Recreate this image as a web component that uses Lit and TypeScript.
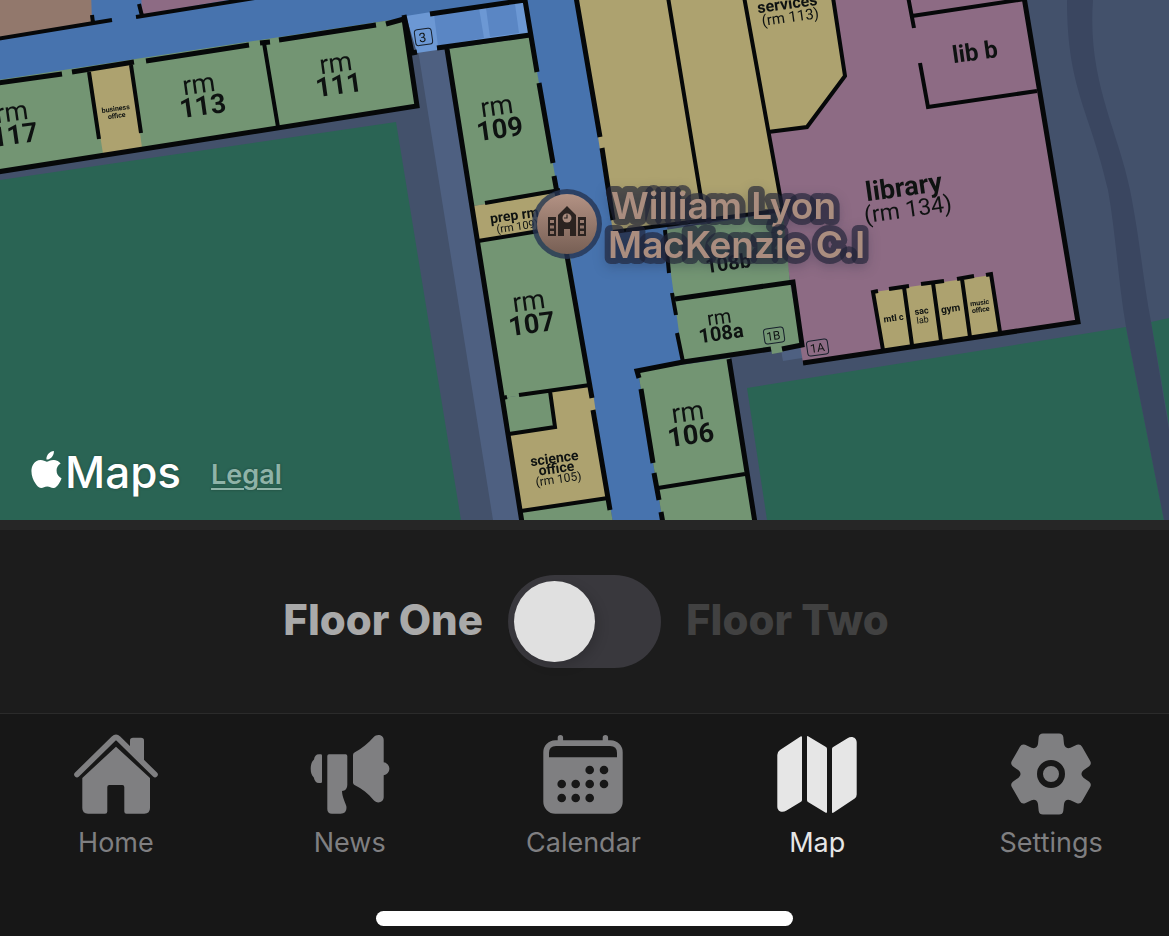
import { LitElement, html, svg, css } from "lit";
import { customElement, property, state } from "lit/decorators.js";
import { classMap } from "lit/directives/class-map.js";

type Shape = [string, string];
type Label = [string, number, number, number, string];

// Ground under the building: [class, points].
const ground: Shape[] = [
  ["grass", "0,180 396,122 461,520 0,520"],
  ["grass", "747,388 1126,327 1164,520 767,520"],
  ["grass", "1151,322 1169,318 1169,425"],
  ["path", "418,50 450,50 524,520 493,520"],
  ["path", "781,350 802,346 802,358 783,361"],
];

// Halls and rooms, painted in order: [class, points].
const areas: Shape[] = [
  ["hall", "-9,-9 577,-9 577,0 614,232 667,226 684,362 638,371 664,529 614,529 530,34 404,18 -9,84"],
  ["brown", "-9,-9 91,-9 92,22 -9,39"],
  ["mauve", "141,-9 280,-9 142,15"],
  ["green", "-9,81 404,18 417,106 -9,173"],
  ["tan", "90,70 131,64 142,148 103,154"],
  ["stairs", "406,16 431,12 525,1 530,34 437,49 437,50 417,53"],
  ["steps", "434,14 479,8 484,38 438,46"],
  ["steps", "486,8 515,4 519,33 490,37"],
  ["green", "447,49 531,37 558,193 473,206"],
  ["tan", "473,206 559,192 566,228 478,241"],
  ["green", "478,241 566,228 589,387 503,398"],
  ["green", "503,398 550,391 555,427 509,434"],
  ["tan", "550,391 592,385 608,499 521,511 509,434 555,427"],
  ["green", "521,511 609,499 614,529 524,529"],
  ["mauve", "744,-9 1023,-9 1078,322 803,363"],
  ["tan", "575,-9 742,-9 783,212 613,232"],
  ["tan", "743,-9 832,-9 845,76 807,127 768,133"],
  ["green", "665,230 783,212 790,283 802,345 683,362"],
  ["green", "638,371 730,358 756,529 664,529"],
  ["green", "771,348 782,346 783,352 772,354"],
  ["tan", "874,292 992,275 1000,332 883,350"],
];

const thickWalls =
  "M-9 173L417 106L404 19L386 24M-9 84L62 74M72 72L134 62M146 61L249 45M260 43L270 42M279 40L376 25" +
  "M430 14L525 0L537 72M404 15L412 53L417 52M437 48L530 35M447 49L523 529" +
  "M539 83L553 163M554 176L558 198M566 250L592 398M593 410L610 510" +
  "M575 -9L600 137M602 148L613 220M803 363L1078 322L1023 -9M639 378L637 371L683 362L771 349M782 349L802 345L793 282L675 299" +
  "M729 359L756 529M641 389L653 463M654 473L659 500M661 512L664 529";

const walls =
  "M264 43L278 127M89 72L99 139M131 65L141 133M92 15L93 23M-9 40L112 20M139 4L142 16M136 17L280 -6" +
  "M485 203L560 190M478 241L545 230M503 398L507 397M519 395L590 385M550 391L555 427L509 434M521 511L608 498" +
  "M667 -9L704 216M743 -9L783 212M613 232L783 210M832 -9L845 76L807 127L768 132" +
  "M907 -9L914 28M912 16L1025 -1M920 63L928 107L1037 91" +
  "M665 230L669 273M672 293L676 315M677 333L683 362M658 488L745 474" +
  "M878 291L873 292L883 350M889 289L909 286M921 284L944 281M957 279L974 276M986 275L991 274L1000 332" +
  "M904 287L912 345M933 283L941 341M962 279L970 337";

// Room names: [text, centre x, baseline y, size, class].
const labels: Label[] = [
  ["rm", 13, 121, 27, "room"], ["117", 16, 144, 27, "num"],
  ["rm", 200, 93, 27, "room"], ["113", 204, 115, 27, "num"],
  ["rm", 337, 72, 27, "room"], ["111", 340, 94, 27, "num"],
  ["rm", 498, 115, 27, "room"], ["109", 501, 138, 27, "num"],
  ["rm", 530, 310, 27, "room"], ["107", 533, 333, 27, "num"],
  ["rm", 689, 421, 27, "room"], ["106", 692, 444, 27, "num"],
  ["rm", 720, 324, 20, "room"], ["108a", 722, 340, 20, "num"],
  ["108b", 729, 270, 20, "num"],
  ["prep rm", 515, 220, 14, "num"], ["(rm 109)", 518, 230, 11, "room"],
  ["science", 555, 463, 14, "num"], ["office", 557, 473, 14, "num"], ["(rm 105)", 559, 483, 12, "room"],
  ["services", 788, 9, 16, "num"], ["(rm 113)", 791, 22, 15, "room"],
  ["lib b", 976, 60, 24, "num"],
  ["library", 905, 196, 27, "num"], ["(rm 134)", 909, 217, 23, "room"],
  ["business", 116, 111, 7, "num"], ["office", 117, 118, 7, "num"],
  ["mtl c", 894, 321, 9, "num"],
  ["sac", 922, 314, 9, "num"], ["lab", 923, 323, 9, "room"],
  ["gym", 951, 312, 10, "num"],
  ["music", 980, 305, 7, "num"], ["office", 981, 312, 7, "num"],
  ["3", 423, 42, 13, "room"], ["1B", 774, 340, 12, "room"], ["1A", 818, 352, 12, "room"],
];

const gearPath = (() => {
  const rotate = (x: number, y: number, deg: number) => {
    const a = (deg * Math.PI) / 180;
    const px = 42 + x * Math.cos(a) - y * Math.sin(a);
    const py = 41 + x * Math.sin(a) + y * Math.cos(a);
    return `${px.toFixed(2)} ${py.toFixed(2)}`;
  };
  let d = "";
  for (let i = 0; i < 6; i++) {
    const p = (x: number, y: number) => rotate(x, y, i * 60);
    d += `${i ? "L" : "M"}${p(-13, -30)}L${p(-12.3, -37)}Q${p(-11.8, -40.5)} ${p(-8, -40.5)}`;
    d += `L${p(8, -40.5)}Q${p(11.8, -40.5)} ${p(12.3, -37)}L${p(13, -30)}Q${p(14.2, -24.6)} ${rotate(-13, -30, i * 60 + 60)}`;
  }
  return d + "Z";
})();

const icons: Record<string, unknown> = {
  home: svg`
    <path d="M3 41.500L39.700 5.600Q42 3.400 44.300 5.600L81 41.500" fill="none" stroke="currentColor" stroke-width="5.600" stroke-linecap="round"/>
    <path d="M56 13V7.500Q56 4.700 59 4.700H67Q70 4.700 70 7.500V30L56 16.500Z"/>
    <path d="M42 13.700L76 45V75Q76 80.700 70.300 80.700H52.500Q50.300 80.700 50.300 78.500V54Q50.300 52 48.300 52H35.300Q33.300 52 33.300 54V78.500Q33.300 80.700 31 80.700H14Q8.300 80.700 8.300 75V45Z"/>`,
  news: svg`
    <path d="M14 22.500Q14 21.300 12.800 21.300H11C8 21.300 6.500 23.300 6 26.500C3.600 28.500 2.700 32 2.700 35.700C2.700 39.500 3.600 42.500 5.800 44.500C6.500 48 8 50 11 50H12.800Q14 50 14 48.800Z"/>
    <path d="M21 21.300H37.600Q39.300 21.300 39.300 23V52Q39.300 57.500 34 57.900C34.300 64 36.500 67.500 38.300 73Q39.500 80.700 32.500 80.700H24Q19.300 80.700 19.300 76V23Q19.300 21.300 21 21.300Z"/>
    <path d="M45 22Q45 20.300 46.500 19.500C54 15.500 60.500 10 65.500 4.300C69 .300 75.700 1.800 75.700 7V29.300A6.500 6.500 0 0 1 75.700 42.200V64C75.700 69.600 69 71.300 65.500 67C60.500 60.500 54 55.500 46.500 52Q45 51.300 45 49.500Z"/>`,
  calendar: svg`
    <path fill-rule="evenodd" d="M14.300 7.300H16.700V4.600A2.700 2.700 0 0 1 22.100 4.600V7.300H61.700V4.600A2.700 2.700 0 0 1 67.100 4.600V7.300H69.700A12 12 0 0 1 81.700 19.300V68.700A12 12 0 0 1 69.700 80.700H14.300A12 12 0 0 1 2.300 68.700V19.300A12 12 0 0 1 14.300 7.300ZM8 24.200H76V20Q76 13 69 13H15Q8 13 8 20Z"/>
    <g class="hole">
      ${[[48.7, 37], [63, 37], [20.7, 51], [34.7, 51], [48.7, 51], [63, 51], [20.7, 65], [34.7, 65], [48.7, 65]].map(
        ([x, y]) => svg`<circle cx=${x} cy=${y} r="4.300"/>`
      )}
    </g>`,
  map: svg`
    <path d="M2.300 22Q2.300 18.700 5 17L25.500 3.500Q27 2.600 27 4.300V67Q27 68 26 68.700L11.500 77.500C7 80.300 2.300 78.300 2.300 73.500Z"/>
    <path d="M32 4Q32 2.400 33.500 3.400L51 14Q52 14.700 52 16V78.500Q52 80.700 50.300 79.600L33 69Q32 68.300 32 67Z"/>
    <path d="M57 16Q57 14.700 58.200 14L72.500 5.200C77 2.500 81.700 4.800 81.700 9.500V61.500Q81.700 64 79.700 65.400L58.700 79.500Q57 80.600 57 79Z"/>`,
  settings: svg`
    <path d=${gearPath}/>
    <circle class="ring" cx="42" cy="41" r="11"/>`,
};

@customElement("floor-map")
class FloorMap extends LitElement {
  static styles = css`
    :host {
      position: relative;
      display: flex;
      align-items: flex-end;
      overflow: hidden;
      background: #43516b;
      min-height: 320px;
      color: #fff;
      font-family: Inter, "Liberation Sans", sans-serif;
    }
    .plan { position: absolute; inset: 0; width: 100%; height: 100%; }
    .overlay { filter: blur(0.6px); }
    .grass { fill: #2a6454; }
    .path { fill: #4e6081; }
    .road { fill: #3a4660; }
    .hall { fill: #4773ae; }
    .stairs { fill: #6c98d4; }
    .steps { fill: #5a86c4; }
    .green { fill: #739573; }
    .tan { fill: #ada26f; }
    .mauve { fill: #8d6b84; }
    .brown { fill: #92786c; }
    .walls { fill: none; stroke: #060809; stroke-width: 4; }
    .thick { stroke-width: 5; }
    .tag { fill: none; stroke: #17202c; stroke-width: 1; }
    .label { font-family: Roboto, sans-serif; text-anchor: middle; fill: #0e1211; }
    .num { font-weight: 700; }
    .room { font-weight: 400; }
    .halo { fill: #263452; opacity: 0.8; }
    .glyph { fill: #2b2320; }
    .face { fill: #a98b7d; }
    .place {
      font-size: 37px;
      font-weight: 600;
      fill: #aa8d7f;
      stroke: rgba(32, 36, 56, 0.65);
      stroke-width: 12;
      stroke-linejoin: round;
      paint-order: stroke;
      filter: drop-shadow(0 4px 6px rgba(20, 30, 50, 0.3));
    }
    .credits {
      position: relative;
      display: flex;
      align-items: center;
      gap: 30px;
      padding: 0 31px 20px;
      text-shadow: 0 0 3px rgba(0, 0, 0, 0.3);
    }
    .brand { display: flex; align-items: center; gap: 3px; font-size: 44px; line-height: 56px; font-weight: 500; }
    .apple { width: 31px; height: 37px; margin-bottom: 5px; fill: #fff; }
    .legal {
      padding-top: 6px;
      font-size: 27px;
      line-height: 32px;
      font-weight: 600;
      color: #8fb3a8;
      text-underline-offset: 4px;
      text-decoration-thickness: 2px;
    }
  `;

  render() {
    return html`
      <svg class="plan" viewBox="0 0 1169 520" preserveAspectRatio="xMidYMid slice" role="img" aria-label="Floor plan">
        <defs>
          <linearGradient id="pin" x1="0" y1="0" x2="0" y2="1">
            <stop offset="0" stop-color="#b39284" />
            <stop offset="1" stop-color="#775f54" />
          </linearGradient>
        </defs>
        ${ground.map(([kind, points]) => svg`<polygon class=${kind} points=${points} />`)}
        <path class="road" d="M1067 0C1067 90 1090 110 1108 190C1116 235 1118 280 1126 327L1164 520H1169V430L1151 322C1143 280 1140 240 1130 190C1118 130 1087 80 1093 0Z" />
        <g class="overlay">
          ${areas.map(([kind, points]) => svg`<polygon class=${kind} points=${points} />`)}
          <path class="walls thick" d=${thickWalls} />
          <path class="walls" d=${walls} />
          <rect class="tag" x="415" y="29" width="17" height="16" rx="3" transform="rotate(-8 423 37)" />
          <rect class="tag" x="764" y="328" width="20" height="15" rx="3" transform="rotate(-8 774 335)" />
          <rect class="tag" x="807" y="340" width="21" height="15" rx="3" transform="rotate(-8 818 347)" />
          ${labels.map(
            ([text, x, y, size, kind]) =>
              svg`<text class="label ${kind}" x=${x} y=${y} font-size=${size} transform="rotate(-8 ${x} ${y})">${text}</text>`
          )}
        </g>
        <circle class="halo" cx="567" cy="224" r="35" />
        <circle fill="url(#pin)" cx="567" cy="224" r="30" />
        <path class="glyph" fill-rule="evenodd" d="M548 217H556V236H548ZM550 220V223H554V220ZM550 225.500V228.500H554V225.500ZM550 231V234H554V231ZM578 217H586V236H578ZM580 220V223H584V220ZM580 225.500V228.500H584V225.500ZM580 231V234H584V231ZM558 236V215L567 206L576 215V236H570V229H564V236Z" />
        <circle class="face" cx="567" cy="218" r="4.500" />
        <path d="M567 214.500V218H564" fill="none" stroke="#2b2320" stroke-width="1.200" />
        <text class="place" x="611" y="219">William Lyon</text>
        <text class="place" x="608" y="258">MacKenzie C.I</text>
      </svg>
      <div class="credits">
        <span class="brand">
          <svg class="apple" viewBox="2 0 20 24" aria-hidden="true">
            <path d="M12.152 6.896c-.948 0-2.415-1.078-3.960-1.040-2.040.027-3.910 1.183-4.961 3.014-2.117 3.675-.546 9.103 1.519 12.090 1.013 1.454 2.208 3.090 3.792 3.039 1.520-.065 2.090-.987 3.935-.987 1.831 0 2.350.987 3.960.948 1.637-.026 2.676-1.480 3.676-2.948 1.156-1.688 1.636-3.325 1.662-3.415-.039-.013-3.182-1.221-3.220-4.857-.026-3.040 2.480-4.494 2.597-4.559-1.429-2.090-3.623-2.324-4.390-2.376-2-.156-3.675 1.090-4.610 1.090zM15.530 3.830c.843-1.012 1.400-2.427 1.245-3.830-1.207.052-2.662.805-3.532 1.818-.780.896-1.454 2.338-1.273 3.714 1.338.104 2.715-.688 3.559-1.701" />
          </svg>
          Maps
        </span>
        <a class="legal" href="#legal">Legal</a>
      </div>
    `;
  }
}

@customElement("floor-switch")
class FloorSwitch extends LitElement {
  @state() private second = false;

  static styles = css`
    :host {
      display: grid;
      grid-template-columns: 1fr auto 1fr;
      align-items: center;
      gap: 25px;
      padding: 45px 24px;
      border-top: 10px solid #262626;
      background: #1c1c1c;
      font-family: Inter, "Liberation Sans", sans-serif;
      font-size: 42px;
      line-height: 48px;
      font-weight: 800;
    }
    .name { padding-bottom: 4px; color: #414141; }
    .first { text-align: right; }
    .current { color: #a9a9a9; }
    .track {
      appearance: none;
      display: flex;
      box-sizing: border-box;
      width: 153px;
      height: 93px;
      margin: 0;
      padding: 6px;
      border-radius: 47px;
      background: #39383d;
      cursor: pointer;
    }
    .track::before {
      content: "";
      width: 81px;
      height: 81px;
      border-radius: 50%;
      background: #e0e0e0;
      box-shadow: 4px 4px 12px rgba(0, 0, 0, 0.15);
    }
    .track:checked { justify-content: flex-end; }
  `;

  private toggle(event: Event) {
    this.second = (event.target as HTMLInputElement).checked;
  }

  render() {
    return html`
      <label for="floor" class=${classMap({ name: true, first: true, current: !this.second })}>Floor One</label>
      <input id="floor" class="track" type="checkbox" role="switch" .checked=${this.second} @change=${this.toggle} />
      <label for="floor" class=${classMap({ name: true, current: this.second })}>Floor Two</label>
    `;
  }
}

@customElement("tab-bar")
class TabBar extends LitElement {
  @property() current = "map";

  static styles = css`
    :host {
      display: block;
      border-top: 1px solid #2b2b2b;
      background: #171717;
      font-family: Inter, "Liberation Sans", sans-serif;
    }
    .tabs { display: grid; grid-template-columns: repeat(5, 1fr); }
    .tab {
      display: flex;
      flex-direction: column;
      align-items: center;
      gap: 10px;
      padding: 19px 2px 52px 0;
      color: #7f7f81;
      font-size: 27px;
      line-height: 32px;
      text-decoration: none;
    }
    .active { color: #e6e6e6; }
    .icon { width: 84px; height: 84px; fill: currentColor; }
    .hole { fill: #171717; }
    .ring { fill: none; stroke: #171717; stroke-width: 6; }
    .handle {
      width: 36%;
      max-width: 417px;
      height: 15px;
      margin: 0 auto 10px;
      border-radius: 8px;
      background: #fff;
    }
  `;

  render() {
    const tabs = ["Home", "News", "Calendar", "Map", "Settings"];
    return html`
      <nav class="tabs">
        ${tabs.map((name) => {
          const key = name.toLowerCase();
          return html`<a href="#${key}" class=${classMap({ tab: true, active: key === this.current })}>
            <svg class="icon" viewBox="0 0 84 84" aria-hidden="true">${icons[key]}</svg>
            <span>${name}</span>
          </a>`;
        })}
      </nav>
      <div class="handle"></div>
    `;
  }
}

@customElement("app-root")
class AppRoot extends LitElement {
  static styles = css`
    :host { display: flex; flex-direction: column; min-height: 100vh; background: #171717; }
    .map { flex: 1; }
  `;

  render() {
    return html`
      <floor-map class="map"></floor-map>
      <floor-switch></floor-switch>
      <tab-bar current="map"></tab-bar>
    `;
  }
}
